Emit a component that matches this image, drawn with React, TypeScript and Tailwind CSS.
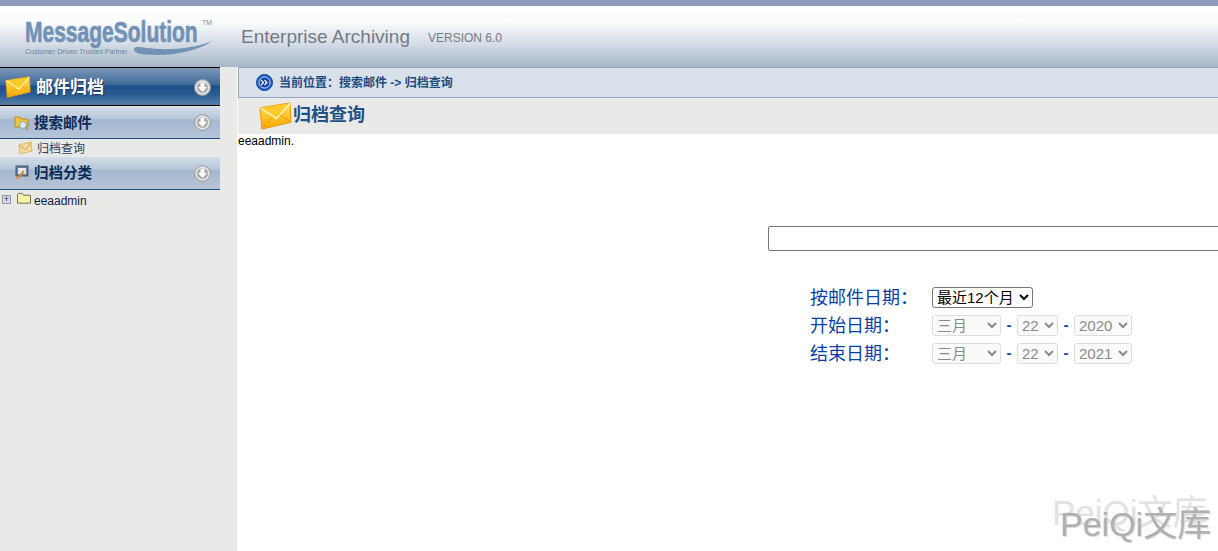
import React from 'react';

const CJK = "font-['Liberation_Sans','Noto_Sans_CJK_SC',sans-serif]";

// round grey button with the down arrow, used on every sidebar header
const DownButton = () => (
  <svg width="17" height="17" viewBox="0 0 17 17">
    <circle cx="8.5" cy="8.5" r="8" fill="#d4d4d4" stroke="#9a9a9a" />
    <circle cx="8.5" cy="8.5" r="6" fill="#a9a9a9" stroke="#efefef" />
    <path d="M6.5 3.500h4v4.500h2.500l-4.500 5-4.500-5h2.500z" fill="#fff" />
  </svg>
);

const Envelope = ({ w, h }: { w: number; h: number }) => (
  <svg width={w} height={h} viewBox="0 0 34 30">
    <defs>
      <linearGradient id="env" x1="0" y1="0" x2="0" y2="1">
        <stop offset="0" stopColor="#ffe25a" />
        <stop offset="1" stopColor="#f7a600" />
      </linearGradient>
    </defs>
    <path d="M1 6 32 1l1 20L3 28z" fill="url(#env)" stroke="#e59a12" strokeWidth="1" />
    <path d="M1.500 6 18 17 32 1.500" fill="#ffc928" stroke="#fff6c8" strokeWidth="1.500" />
    <path d="M3 27 14 15M32 20 21 13" fill="none" stroke="#f0a000" />
  </svg>
);

const SectionHeader = ({ title, icon, height }: { title: string; icon: React.ReactNode; height: string }) => (
  <div className={`flex w-[220px] items-center border-b border-[#1f4f80] bg-[linear-gradient(#d2dde9_0%,#b7c7da_38%,#a5b8d0_42%,#b5c5d9_100%)] pr-[9px] ${height}`}>
    <div className="flex w-[34px] justify-end pr-[4px]">{icon}</div>
    <span className="mt-[2px] flex-1 text-[14.5px] font-bold text-[#0d2b55]">{title}</span>
    <DownButton />
  </div>
);

const Sidebar = () => (
  <aside className={`flex w-[237px] shrink-0 flex-col bg-[#e9e9e7] ${CJK}`}>
    {/* 邮件归档 */}
    <div className="flex h-[39px] w-[220px] items-center border-y border-black bg-[linear-gradient(#7c98b8_0%,#3c6898_46%,#1d4f88_48%,#2a5a90_70%,#5880a8_100%)] pl-[5px] pr-[9px] pt-px">
      <Envelope w={26} h={23} />
      <span className="ml-[5px] mt-px flex-1 text-[17px] font-bold text-white [text-shadow:1px_1px_1px_#1a3560]">邮件归档</span>
      <DownButton />
    </div>

    <div className="mt-px">
      <SectionHeader
        title="搜索邮件"
        height="h-[32px]"
        icon={
          <svg width="16" height="16" viewBox="0 0 16 16">
            <path d="M1 2h5l1 2h7v8H1z" fill="#f2c13e" stroke="#b58a20" />
            <circle cx="9" cy="10" r="3.500" fill="#d9e8f5" stroke="#8aa" />
            <path d="M11.500 12.500 14 15" stroke="#c48a20" strokeWidth="1.500" />
          </svg>
        }
      />
    </div>

    <div className="flex h-[18px] items-center pl-[18px]">
      <svg width="15" height="14" viewBox="0 0 15 14">
        <path d="M1 4 13 1l1 9-12 3z" fill="#f5dc9a" stroke="#d8b868" />
        <path d="M1 4l7 5 5-8" fill="none" stroke="#c8a860" />
      </svg>
      <span className="ml-[4px] mt-[2px] text-[12px] leading-none text-[#2b3f5a]">归档查询</span>
    </div>

    <SectionHeader
      title="归档分类"
      height="h-[33px]"
      icon={
        <svg width="16" height="16" viewBox="0 0 16 16">
          <rect x="2" y="1" width="12" height="10" fill="#5f7fae" stroke="#555" />
          <rect x="4" y="3" width="8" height="6" fill="#dfe8f3" />
          <path d="M3 14 10 6" stroke="#e58a20" strokeWidth="2" />
        </svg>
      }
    />

    {/* tree */}
    <div className="mt-[2px] flex items-start pl-[2px]">
      <div className="mt-[3px] flex h-[9px] w-[9px] items-center justify-center border border-[#8a97ad] bg-[#d5dcec] text-[9px] leading-none text-[#20386b]">
        +
      </div>
      <svg className="ml-[5px]" width="16" height="13" viewBox="0 0 16 14">
        <path d="M1 12V2.500L2 1.500h4l1.500 2H15V12z" fill="#fbf1a6" stroke="#6a6a4a" />
      </svg>
      <span className="ml-[2px] mt-[2px] text-[12px] leading-[14px] text-[#10204a]">eeaadmin</span>
    </div>
  </aside>
);

const DateRow = ({ label, year }: { label: string; year: string }) => (
  <div className="flex h-[28px] items-center">
    <span className="mt-[2px] w-[122px] text-[18px] leading-none text-[#0b3fa5]">{label}</span>
    <select disabled defaultValue="三月" className="h-[21px] w-[69px] rounded-[3px] border border-[#dcdcdc] bg-[#fafafa] text-[15px] text-[#8a8a8a]">
      <option>三月</option>
    </select>
    <span className="w-[16px] text-center text-[15px] font-bold text-[#0b3fa5]">-</span>
    <select disabled defaultValue="22" className="h-[21px] w-[41px] rounded-[3px] border border-[#dcdcdc] bg-[#fafafa] text-[15px] text-[#8a8a8a]">
      <option>22</option>
    </select>
    <span className="w-[16px] text-center text-[15px] font-bold text-[#0b3fa5]">-</span>
    <select disabled defaultValue={year} className="h-[21px] w-[58px] rounded-[3px] border border-[#dcdcdc] bg-[#fafafa] text-[15px] text-[#8a8a8a]">
      <option>{year}</option>
    </select>
  </div>
);

export default function App() {
  return (
    <div className={`relative flex h-screen w-full flex-col overflow-hidden bg-white ${CJK}`}>
      <div className="h-[6px] shrink-0 bg-[#8f9bbe]" />

      {/* header */}
      <header className="flex h-[61px] shrink-0 bg-[linear-gradient(#ffffff_0%,#fbfcfd_25%,#d5dde6_62%,#a7b6c7_100%)] pl-[25px]">
        <div className="relative w-[216px]">
          <div className="mt-[11px] origin-left scale-x-[0.7] whitespace-nowrap text-[30px] font-bold leading-[30px] text-[#7292b5] [-webkit-text-stroke:0.7px_#7292b5] [font-family:'Liberation_Sans',sans-serif]">
            MessageSolution
          </div>
          <span className="absolute left-[177px] top-[12px] text-[7px] leading-[9px] text-[#7c8b9c]">TM</span>
          <div className="flex items-center">
            <span className="whitespace-nowrap text-[7px] leading-[9px] text-[#6783a3]">Customer Driven Trusted Partner</span>
            <svg className="ml-[5px] -mt-[8px]" width="80" height="16" viewBox="0 0 82 16">
              <path d="M1 9C2 6 6 7 14 8 38 11 64 8 81 1 66 11 42 16 18 15 8 15 0 13 1 9z" fill="#7292b5" />
            </svg>
          </div>
        </div>
        <div className="flex h-[60px] items-center text-[#737b84]">
          <span className="text-[19px] leading-none">Enterprise Archiving</span>
          <span className="ml-[18px] mt-[4px] text-[12px] leading-none">VERSION 6.0</span>
        </div>
      </header>

      <div className="flex min-h-0 flex-1">
        <Sidebar />

        <main className="flex min-w-0 flex-1 flex-col overflow-hidden pl-px">
          {/* breadcrumb */}
          <div className="flex h-[31px] shrink-0 items-center border-y border-[#93a5bc] border-l bg-[#d8e0e9] pl-[17px]">
            <svg width="17" height="17" viewBox="0 0 17 17">
              <circle cx="8.500" cy="8.500" r="8" fill="#1d5fd0" stroke="#12409a" />
              <circle cx="8.500" cy="8.500" r="5.500" fill="#0d3fa8" stroke="#cfe0fa" />
              <path d="M5 6l2.500 2.500L5 11M8.500 6 11 8.500 8.500 11" fill="none" stroke="#fff" strokeWidth="1.300" />
            </svg>
            <span className="ml-[6px] text-[12px] font-bold text-[#1d4d7e]">当前位置：搜索邮件 -&gt; 归档查询</span>
          </div>

          {/* page title */}
          <div className="flex h-[36px] shrink-0 items-center bg-[#e9e9e7] pl-[21px]">
            <Envelope w={33} h={31} />
            <span className="-mt-[2px] ml-px text-[18px] font-bold text-[#1d5288]">归档查询</span>
          </div>

          <div className="text-[12px] leading-[14px] text-black">eeaadmin.</div>

          {/* search form */}
          <div className="ml-[530px] mt-[78px]">
            <input className="block h-[25px] w-[600px] rounded-[2px] border border-[#767676] bg-white" />
            <div className="ml-[42px] mt-[32px]">
              <div className="flex h-[28px] items-center">
                <span className="mt-[2px] w-[122px] text-[18px] leading-none text-[#0b3fa5]">按邮件日期：</span>
                <select defaultValue="12" className="h-[21px] w-[101px] rounded-[3px] border border-[#767676] bg-white text-[15px] text-black">
                  <option value="12">最近12个月</option>
                </select>
              </div>
              <DateRow label="开始日期：" year="2020" />
              <DateRow label="结束日期：" year="2021" />
            </div>
          </div>
        </main>
      </div>

      {/* watermark */}
      <span className="absolute left-[1052px] top-[495px] text-[35px] leading-none text-[#e2e2e2]">PeiQi文库</span>
      <span className="absolute left-[1060px] top-[507px] text-[34px] leading-none text-[#b0b0b0] [text-shadow:1px_1px_1px_#d8d8d8]">PeiQi文库</span>
    </div>
  );
}
